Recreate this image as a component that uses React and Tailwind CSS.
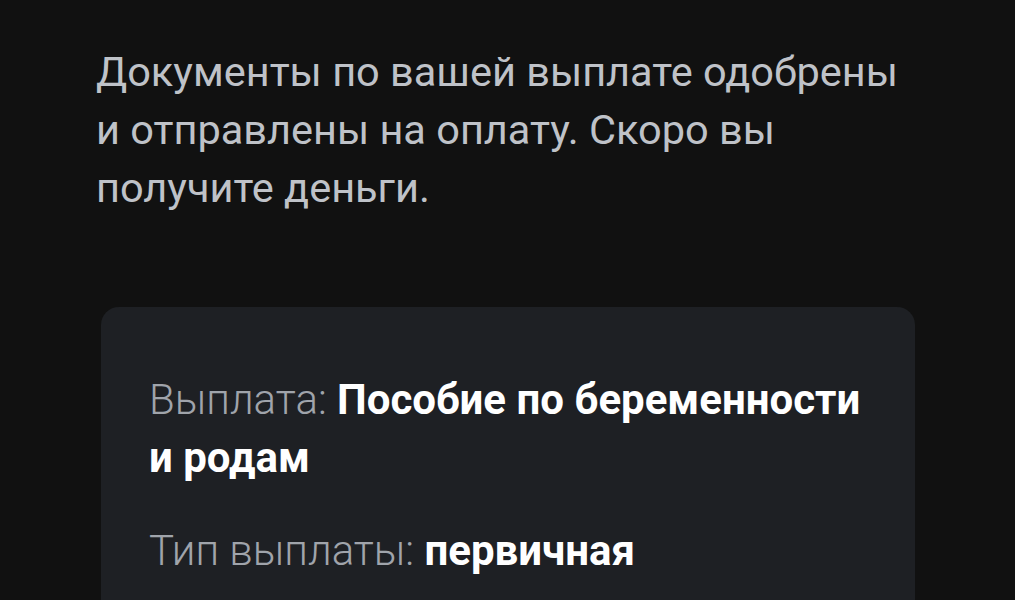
import React from 'react';

function App() {
  const rows = [
    { label: 'Выплата:', value: 'Пособие по беременности и родам' },
    { label: 'Тип выплаты:', value: 'первичная' },
  ];

  return (
    <div
      className="h-[600px] w-full overflow-hidden bg-[#111111] pt-[43px] pl-[96px] pr-[100px]"
      style={{ fontFamily: 'Roboto, "Noto Sans", sans-serif' }}
    >
      <p className="text-[41.5px] leading-[58px] text-[#bfc2c8] max-w-[815px]">
        Документы по вашей выплате одобрены и отправлены на оплату. Скоро вы получите деньги.
      </p>

      <div className="mt-[90px] ml-[5px] rounded-[18px] bg-[#1e2024] pt-[64px] pl-[48px] pr-[48px] pb-[40px]">
        {rows.map((row, index) => (
          <p key={index} className="text-[42px] leading-[58px] mb-[35px] max-w-[720px]">
            <span className="font-light text-[#a0a4ab]">{row.label} </span>
            <span className="font-bold text-white">{row.value}</span>
          </p>
        ))}
      </div>
    </div>
  );
}

export default App;
